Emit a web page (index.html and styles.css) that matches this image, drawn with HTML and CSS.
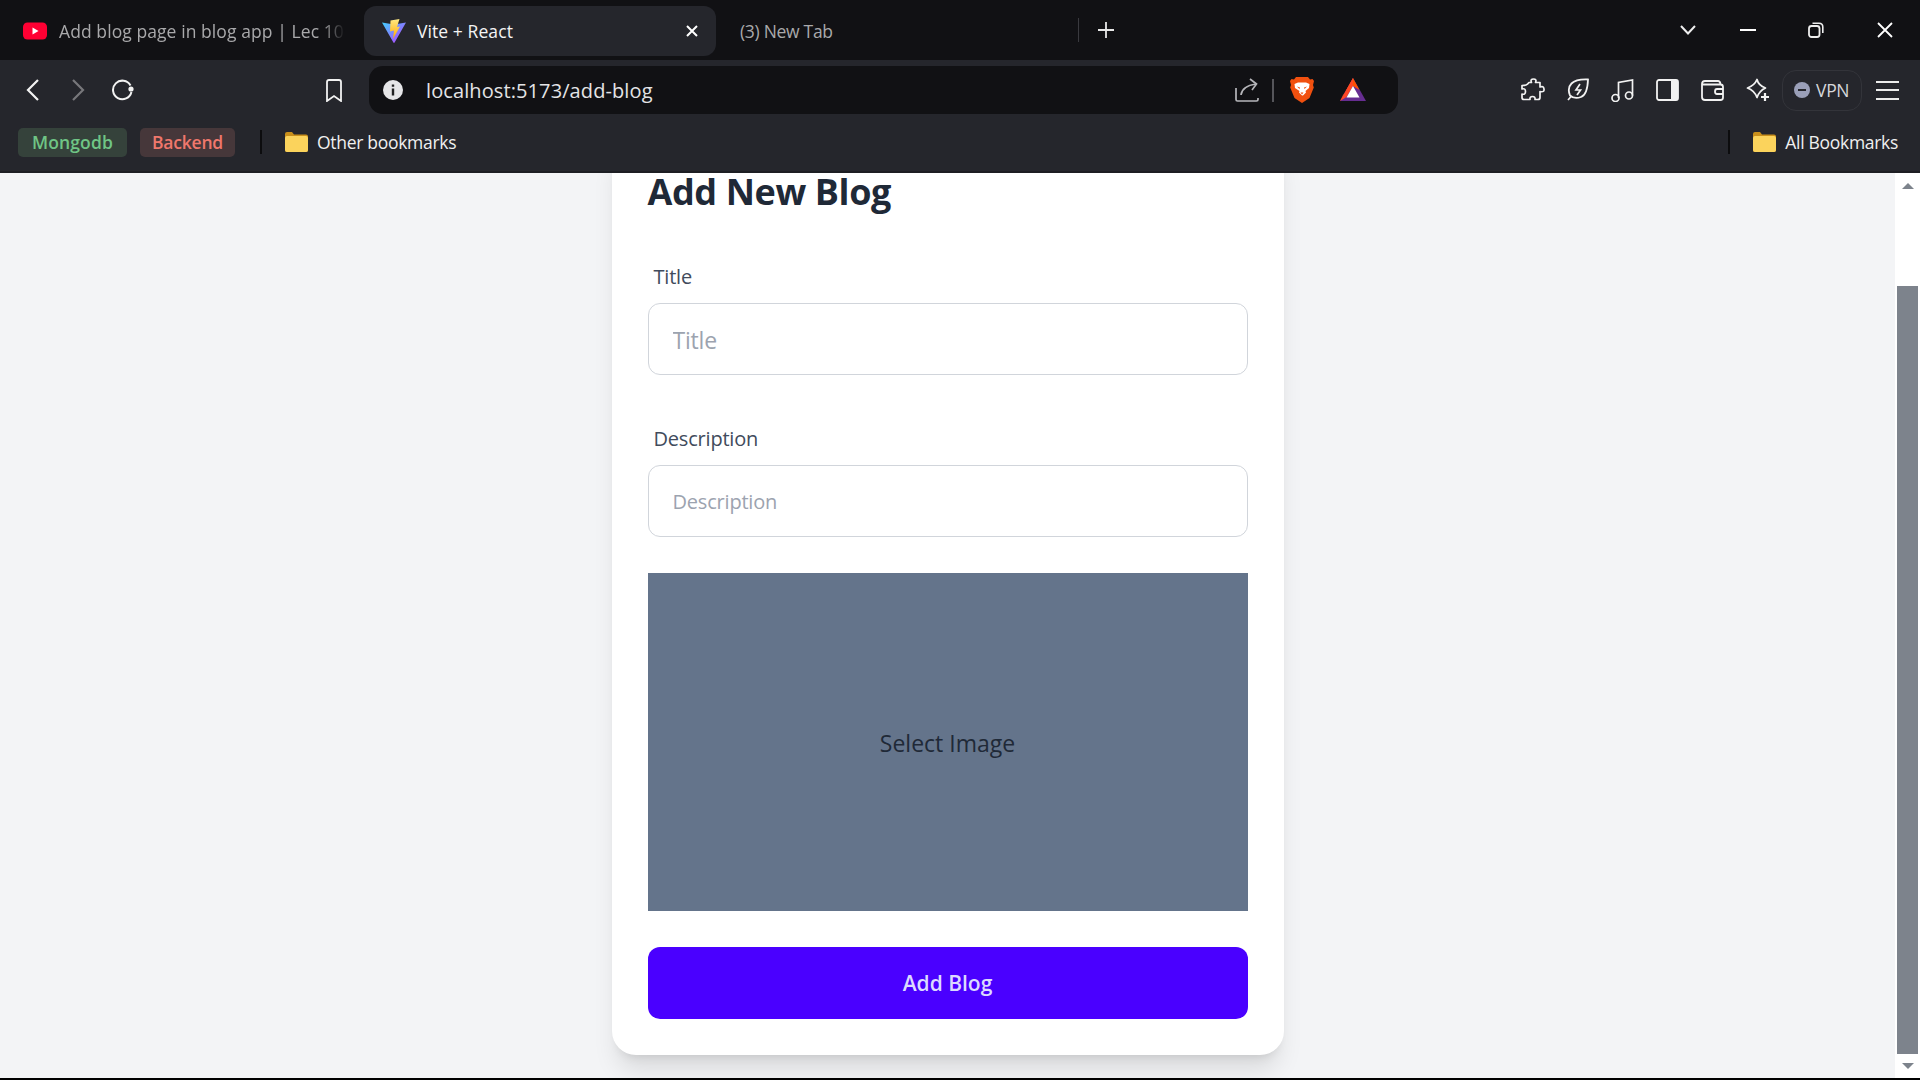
FILE: index.html
```html
<!DOCTYPE html>
<html lang="en">
<head>
  <meta charset="UTF-8">
  <title>Vite + React</title>
  <link rel="stylesheet" href="styles.css">
</head>
<body>
  <div id="tabstrip">
    <div class="tab tab-first">
      <svg class="favicon" width="24" height="18" viewBox="0 0 24 18"><rect width="24" height="17" y="0.5" rx="4.5" fill="#ff0033"/><path d="M9.5 5.5v7l6-3.5z" fill="#fff"/></svg>
      <span class="tab-title">Add blog page in blog app | Lec 100</span>
    </div>
    <div class="tab tab-active">
      <svg class="favicon" width="24" height="24" viewBox="0 0 24 24">
        <defs>
          <linearGradient id="viteBg" x1="0" y1="0" x2="1" y2="1"><stop offset="0" stop-color="#41d1ff"/><stop offset="1" stop-color="#bd34fe"/></linearGradient>
          <linearGradient id="viteBolt" x1="0" y1="0" x2="0" y2="1"><stop offset="0" stop-color="#ffea83"/><stop offset="1" stop-color="#ffa800"/></linearGradient>
        </defs>
        <path d="M0 3.5 12 5.500 24 3.500 12.600 23.500q-.6.8-1.200 0z" fill="url(#viteBg)"/>
        <path d="M8.500 1.500 17.500 0 15 8 18 7.500 11 20 12 11.500 8 12.500z" fill="url(#viteBolt)"/>
      </svg>
      <span class="tab-title">Vite + React</span>
      <svg class="tab-close" width="12" height="12" viewBox="0 0 12 12"><path d="M1 1l10 10M11 1 1 11" stroke="#fff" stroke-width="2"/></svg>
    </div>
    <div class="tab tab-last">
      <span class="tab-title">(3) New Tab</span>
    </div>
    <button class="newtab">
      <svg width="16" height="16" viewBox="0 0 16 16"><path d="M8 0v16M0 8h16" stroke="#e8e8e8" stroke-width="1.8"/></svg>
    </button>
    <div class="window-controls">
      <svg class="tablist" width="16" height="10" viewBox="0 0 16 10"><path d="M1 1l7 7.500L15 1" fill="none" stroke="#eee" stroke-width="2"/></svg>
      <svg class="win-min" width="16" height="2" viewBox="0 0 16 2"><path d="M0 1h16" stroke="#fff" stroke-width="2"/></svg>
      <svg class="win-max" width="16" height="16" viewBox="0 0 16 16"><rect x="1" y="4" width="10.500" height="11" rx="2.500" fill="none" stroke="#eee" stroke-width="1.800"/><path d="M4.500 1.200h6.500q3.800 0 3.800 3.800v6" fill="none" stroke="#eee" stroke-width="1.600"/></svg>
      <svg class="win-close" width="16" height="16" viewBox="0 0 16 16"><path d="M1 1l14 14M15 1 1 15" stroke="#fff" stroke-width="1.800"/></svg>
    </div>
  </div>

  <div id="toolbar">
    <button class="tool"><svg width="14" height="22" viewBox="0 0 14 22"><path d="M12 1 2 11l10 10" fill="none" stroke="#f2f2f2" stroke-width="2.200"/></svg></button>
    <button class="tool"><svg width="14" height="22" viewBox="0 0 14 22"><path d="M2 1l10 10L2 21" fill="none" stroke="#77777b" stroke-width="2.200"/></svg></button>
    <button class="tool"><svg width="24" height="22" viewBox="0 0 24 22"><path d="M19.500 6.500A9.300 9.300 0 1 0 20.400 13" fill="none" stroke="#f2f2f2" stroke-width="2"/><circle cx="20" cy="10" r="2.600" fill="#f2f2f2"/></svg></button>
    <button class="tool tool-bookmark"><svg width="16" height="23" viewBox="0 0 16 23"><path d="M1 3q0-2 2-2h10q2 0 2 2v19l-7-5-7 5z" fill="none" stroke="#f2f2f2" stroke-width="1.800"/></svg></button>

    <div class="addressbar">
      <svg class="info" width="20" height="20" viewBox="0 0 20 20"><circle cx="10" cy="10" r="10" fill="#e6e6e8"/><path d="M8.800 4.500h2.400v2.300H8.800zM8.800 8.500h2.400v7H8.800z" fill="#222"/></svg>
      <span class="url">localhost:5173/add-blog</span>
      <svg class="share" width="24" height="24" viewBox="0 0 24 24"><path d="M1 10v11.500q0 1.500 1.500 1.500h19q1.500 0 1.500-1.500V20M6 17q1-9 15-11" fill="none" stroke="#b6b6ba" stroke-width="1.700"/><path d="M15 1l6.500 5-4.500 6" fill="none" stroke="#b6b6ba" stroke-width="1.700"/></svg>
      <span class="addr-sep"></span>
      <svg class="brave" width="24" height="26" viewBox="0 0 24 26">
        <path d="M6 0h12l2 2.500 2.500-.5L24 4l-1 4 .8 2.500-4.300 10.500L12 26l-7.500-5L.2 10.500 1 8 0 4l1.500-2 2.500.5z" fill="#f1500f"/>
        <path d="M4.500 7 8 5.500h8L19.500 7l-.5 4-3.500 3 .5 1.500-3 3h-1l-3-3 .5-1.500L5 11z" fill="#fff"/>
        <path d="M7 9.500l3 1-.5 1.500zM17 9.500l-3 1 .5 1.500zM10.500 15.500h3L12 17.500z" fill="#f1500f"/>
      </svg>
      <svg class="bat" width="26" height="24" viewBox="0 0 26 24">
        <path d="M13 0 26 23H0z" fill="#662d91"/>
        <path d="M13 0 19.500 12 13 8 6.500 12 3 17 0 23z" fill="#ff5000"/>
        <path d="M13 0 0 23l6.500-4L13 8z" fill="#ff4724"/>
        <path d="M13 8 19.500 19.500h-13z" fill="#fff"/>
      </svg>
    </div>

    <div class="extensions">
      <button class="tool"><svg width="24" height="24" viewBox="0 0 24 24"><path d="M8 4.500h2.500q-1.500-3.500 2-3.500t2 3.500H19v4.500q3.500-1.500 4 2t-4 2.500v6q0 2-2 2h-3q.5-3-2.500-3t-2.500 3H3q-2 0-2-2v-3.500q3.500 1 3.500-2.500T1 11V7.500q2.500 0 4-.5T8 4.500z" fill="none" stroke="#f2f2f2" stroke-width="1.700" stroke-linejoin="round"/></svg></button>
      <button class="tool"><svg width="22" height="24" viewBox="0 0 22 24"><path d="M21 1.500Q9 1 4.500 5.500t-1.500 12q4.500 4 11 1.500T21 1.500z" fill="none" stroke="#f2f2f2" stroke-width="1.800"/><path d="M1 22l3.500-4M13 6l-4 6h4.500l-3.500 5" fill="none" stroke="#f2f2f2" stroke-width="1.700"/></svg></button>
      <button class="tool"><svg width="23" height="24" viewBox="0 0 23 24"><path d="M7.500 20V4.500L21.500 2v15.500" fill="none" stroke="#f2f2f2" stroke-width="1.700"/><circle cx="4.500" cy="20" r="3.500" fill="none" stroke="#f2f2f2" stroke-width="1.700"/><circle cx="18" cy="17.500" r="3.500" fill="none" stroke="#f2f2f2" stroke-width="1.700"/></svg></button>
      <button class="tool"><svg width="23" height="22" viewBox="0 0 23 22"><rect x="1" y="1" width="21" height="20" rx="2" fill="none" stroke="#f2f2f2" stroke-width="1.800"/><path d="M15 1h5q2 0 2 2v16q0 2-2 2h-5z" fill="#f2f2f2"/></svg></button>
      <button class="tool"><svg width="23" height="22" viewBox="0 0 23 22"><path d="M1 5q0-3 3-3h13q2 0 2.500 3M1 5v13q0 3 3 3h15.500q2.500 0 2.500-2.500V8q0-2.500-2.500-2.500H1" fill="none" stroke="#f2f2f2" stroke-width="1.800"/><path d="M22 10h-6q-2 0-2 2.500t2 2.500h6" fill="none" stroke="#f2f2f2" stroke-width="1.800"/></svg></button>
      <button class="tool"><svg width="24" height="24" viewBox="0 0 24 24"><path d="M11 1.500q1.500 6 8.500 8.500-6 2.500-8.500 9.500Q8.500 12.500 1.500 10 8.500 7.500 11 1.500z" fill="none" stroke="#f2f2f2" stroke-width="1.800" stroke-linejoin="round"/><path d="M19 15v8M15 19h8" stroke="#f2f2f2" stroke-width="2.200"/></svg></button>
    </div>
    <div class="vpn">
      <span class="vpn-dot"></span>
      <span>VPN</span>
    </div>
    <div class="menu"><span></span><span></span><span></span></div>
  </div>

  <div id="bookmarks">
    <span class="chip chip-green">Mongodb</span>
    <span class="chip chip-red">Backend</span>
    <span class="bm-sep"></span>
    <span class="bm">
      <svg width="23" height="20" viewBox="0 0 23 20"><path d="M0 2q0-2 2-2h5l2 2.500h12q2 0 2 2V18q0 2-2 2H2q-2 0-2-2z" fill="#c98f1b"/><rect y="4" width="23" height="16" rx="2" fill="#fbd35c"/></svg>
      Other bookmarks
    </span>
    <span class="bm-sep bm-sep-right"></span>
    <span class="bm">
      <svg width="23" height="20" viewBox="0 0 23 20"><path d="M0 2q0-2 2-2h5l2 2.500h12q2 0 2 2V18q0 2-2 2H2q-2 0-2-2z" fill="#c98f1b"/><rect y="4" width="23" height="16" rx="2" fill="#fbd35c"/></svg>
      All Bookmarks
    </span>
  </div>

  <div id="viewport">
    <main id="conteudo">
      <div class="card">
        <h1>Add New Blog</h1>
        <div class="campo">
          <label for="title">Title</label>
          <input type="text" id="title" class="input-title" placeholder="Title">
        </div>
        <div class="campo">
          <label for="description">Description</label>
          <input type="text" id="description" placeholder="Description">
        </div>
        <div class="select-image">Select Image</div>
        <button class="btn-add">Add Blog</button>
      </div>
    </main>
    <aside id="scrollbar">
      <span class="seta seta-up"></span>
      <span class="thumb"></span>
      <span class="seta seta-down"></span>
    </aside>
  </div>
</body>
</html>
```

FILE: styles.css
```css
* { box-sizing: border-box; }
html, body { height: 100%; }
body { margin: 0; padding-bottom: 2px; background: #000; overflow: hidden; display: flex; flex-direction: column; font-family: "Open Sans", "Noto Sans", sans-serif; }
button { border: none; background: none; padding: 0; font-family: inherit; }
svg { display: block; flex-shrink: 0; }

/* tabs */
#tabstrip { height: 60px; flex-shrink: 0; background: #111114; display: flex; align-items: flex-start; padding-top: 6px; }
.tab { height: 50px; display: flex; align-items: center; font-size: 17.5px; letter-spacing: 0.08px; color: #a9a9ab; white-space: nowrap; overflow: hidden; }
.tab-first { width: 364px; padding-left: 23px; padding-right: 19px; gap: 12px; }
.tab-first .tab-title { overflow: hidden; -webkit-mask-image: linear-gradient(to right, #000 92%, transparent); mask-image: linear-gradient(to right, #000 92%, transparent); }
.tab-active { width: 352px; background: #25262c; border-radius: 12px; padding-left: 18px; gap: 11px; color: #f4f4f4; }
.tab-active .tab-close { margin-left: auto; margin-right: 18px; }
.tab-last { width: 362px; padding-left: 24px; letter-spacing: -0.3px; }
.newtab { width: 55px; height: 24px; margin-top: 12px; display: flex; align-items: center; justify-content: center; border-left: 1px solid #3a3a3f; }
.window-controls { margin-left: auto; display: flex; align-items: center; height: 48px; padding-right: 27px; }
.tablist { margin-right: 44px; }
.win-min { margin-right: 52px; }
.win-max { margin-right: 53px; }

/* toolbar */
#toolbar { height: 55px; flex-shrink: 0; background: #25262c; display: flex; align-items: center; padding: 5px 0 0 10px; }
.tool { width: 45px; height: 40px; display: flex; align-items: center; justify-content: center; }
.tool-bookmark { margin-left: 166px; }
.addressbar { width: 1029px; height: 48px; flex-shrink: 0; margin-left: 13px; background: #111114; border-radius: 14px; display: flex; align-items: center; padding-left: 14px; }
.url { margin-left: 23px; font-size: 20px; letter-spacing: 0.1px; color: #e4e4e6; }
.share { margin-left: auto; }
.addr-sep { width: 2px; height: 23px; background: #55555a; margin-left: 13px; }
.brave { margin-left: 16px; }
.bat { margin-left: 26px; margin-right: 32px; }
.extensions { display: flex; margin-left: 112px; }
.vpn { width: 80px; height: 41px; margin-left: 2px; border: 1.5px solid #33343a; border-radius: 14px; display: flex; align-items: center; gap: 6px; padding-left: 11px; font-size: 17.5px; letter-spacing: -0.3px; color: #d6d6da; }
.vpn-dot { width: 16px; height: 16px; border-radius: 50%; background: #9a9fb8; position: relative; }
.vpn-dot::after { content: ""; position: absolute; left: 4px; right: 4px; top: 7px; height: 2px; background: #25262c; }
.menu { width: 23px; margin-left: 14px; display: flex; flex-direction: column; gap: 6.5px; }
.menu span { height: 2px; background: #ececec; }

/* bookmarks */
#bookmarks { height: 58px; flex-shrink: 0; background: #25262c; border-bottom: 2px solid #1d1e23; display: flex; align-items: center; padding: 0 22px 2px 18px; font-size: 17.5px; letter-spacing: -0.3px; color: #f0f0f0; }
.chip { height: 29px; border-radius: 5px; display: flex; align-items: center; justify-content: center; font-weight: 600; letter-spacing: 0.1px; }
.chip-green { width: 109px; background: #35423b; color: #6fc585; }
.chip-red { width: 95px; margin-left: 13px; background: #46373a; color: #f0776c; letter-spacing: -0.2px; }
.bm-sep { width: 2px; height: 24px; background: #0c0c0e; margin-left: 25px; }
.bm-sep-right { margin-left: auto; }
.bm { display: flex; align-items: center; gap: 9px; margin-left: 23px; }

/* page */
#viewport { flex: 1; display: flex; min-height: 0; background: #fff; }
#conteudo { flex: 1; background: #f3f4f6; display: flex; flex-direction: column; justify-content: flex-end; align-items: center; padding-bottom: 23px; overflow: hidden; }
.card { width: 672px; flex-shrink: 0; background: #fff; border-radius: 24px; padding: 36px; box-shadow: 0 20px 25px -5px rgba(0,0,0,.1), 0 8px 10px -6px rgba(0,0,0,.1); display: flex; flex-direction: column; gap: 36px; }
.card h1 { margin: 0 0 -1px; font-size: 36px; line-height: 44px; font-weight: 700; letter-spacing: -0.4px; color: #1f2937; }
.campo { display: flex; flex-direction: column; }
.campo label { height: 54px; padding: 1px 0 0 6px; display: flex; align-items: center; font-size: 20px; letter-spacing: -0.2px; color: #414b5c; }
.campo input { height: 72px; width: 100%; padding: 1px 24px 0; border: 1.5px solid #d1d5db; border-radius: 12px; background: #fff; font-family: inherit; font-size: 20px; letter-spacing: -0.2px; outline: none; }
.campo input::placeholder { color: #9ca3af; opacity: 1; }
.campo .input-title { font-size: 23px; }
.select-image { height: 338px; padding-top: 2px; background: #64748b; display: flex; align-items: center; justify-content: center; font-size: 23px; color: #1f2937; }
.btn-add { height: 72px; background: #4a00ff; border-radius: 12px; font-size: 21px; font-weight: 600; color: #dcdaff; }

/* scrollbar */
#scrollbar { width: 25px; background: #fff; display: flex; flex-direction: column; align-items: center; }
.thumb { width: 21px; height: 768px; margin-top: 97px; background: #7d838c; }
.seta { width: 0; height: 0; border-left: 6px solid transparent; border-right: 6px solid transparent; }
.seta-up { margin-top: 10px; border-bottom: 6px solid #7d838c; }
.seta-down { margin-top: 9px; border-top: 6px solid #7d838c; }
```
